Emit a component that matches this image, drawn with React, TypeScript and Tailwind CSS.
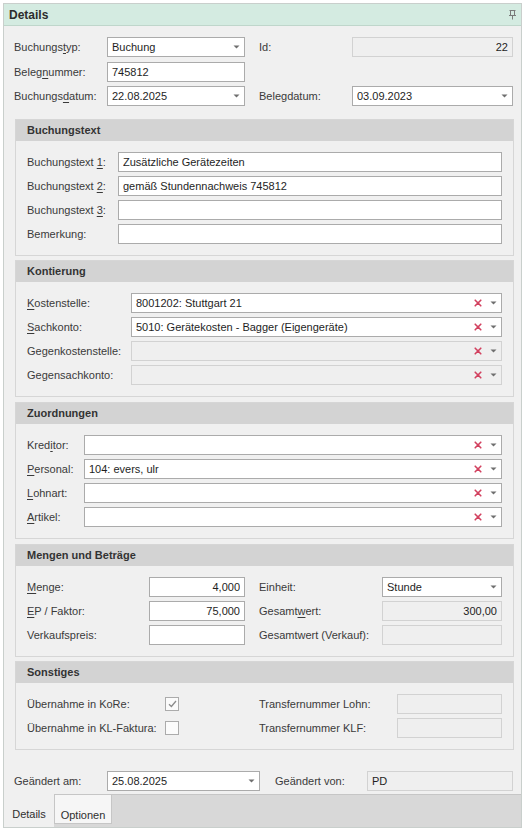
import React from "react";

const Arrow = () => (
  <svg width="7" height="4" viewBox="0 0 7 4" className="shrink-0">
    <path d="M0.5 0.5 L6.5 0.5 L3.5 3.5 Z" fill="#6f6f6f" />
  </svg>
);

const Cross = () => (
  <svg width="8" height="8" viewBox="0 0 8 8" className="shrink-0">
    <path d="M1.2 1.2 L6.8 6.8 M6.8 1.2 L1.2 6.8" stroke="#d2415f" strokeWidth="1.6" strokeLinecap="round" />
  </svg>
);

type FieldProps = {
  value?: React.ReactNode;
  className?: string;
  right?: boolean;
  disabled?: boolean;
  combo?: boolean;
  lookup?: boolean;
};

const Field = ({ value, className = "", right, disabled, combo, lookup }: FieldProps) => (
  <div
    className={
      "h-[20px] flex items-center border pl-[4px] pr-[4px] " +
      (disabled ? "bg-[#efefef] border-[#d2d2d2] " : "bg-white border-[#ababab] ") +
      className
    }
  >
    <div className={"flex-1 truncate text-[#1e1e1e] " + (right ? "text-right" : "")}>{value}</div>
    {lookup && (
      <div className="flex items-center gap-[8px] pl-[4px]">
        <Cross />
        <Arrow />
      </div>
    )}
    {combo && (
      <div className="flex items-center pl-[4px]">
        <Arrow />
      </div>
    )}
  </div>
);

const U = ({ children }: { children: React.ReactNode }) => <span className="underline underline-offset-2">{children}</span>;

const Label = ({ children, className = "" }: { children: React.ReactNode; className?: string }) => (
  <div className={"shrink-0 text-[#3a3a3a] whitespace-nowrap " + className}>{children}</div>
);

const Group = ({ title, children, mt = "mt-[4px]" }: { title: string; children: React.ReactNode; mt?: string }) => (
  <div className={"ml-[11px] mr-[7px] border border-[#d6d6d6] bg-[#f0f0f0] " + mt}>
    <div className="h-[21px] bg-[#d3d3d3] flex items-center pl-[11px] font-bold text-[#333333]">{title}</div>
    <div className="pt-[11px] pb-[11px] px-[11px] flex flex-col gap-[4px]">{children}</div>
  </div>
);

const Row = ({ children }: { children: React.ReactNode }) => <div className="h-[20px] flex items-center">{children}</div>;

const Check = ({ checked }: { checked?: boolean }) => (
  <div className="w-[14px] h-[14px] border border-[#ababab] bg-[#fbfbfb] flex items-center justify-center">
    {checked && (
      <svg width="9" height="8" viewBox="0 0 9 8">
        <path d="M1 4.2 L3.4 6.5 L8 1" stroke="#8c8c8c" strokeWidth="1.3" fill="none" />
      </svg>
    )}
  </div>
);

export default function App() {
  return (
    <div className="w-[528px] h-[832px] bg-white font-['Liberation_Sans',Arial,sans-serif] text-[11px] leading-none overflow-hidden">
      <div className="ml-[3px] mt-[3px] w-[519px] h-[825px] border border-[#c9cfcc] flex flex-col">
        <div className="h-[22px] bg-[#d4ebe1] border-b border-[#bfd6cb] flex items-center justify-between pl-[5px] pr-[5px] shrink-0">
          <span className="font-bold text-[12px] text-[#2d2d2d]">Details</span>
          <svg width="7" height="10" viewBox="0 0 7 10">
            <path d="M0.5 0.5 H6.5 M1.5 0.5 V5.5 M5.5 0.5 V5.5 M0 5.5 H7 M3.5 5.5 V9.5" stroke="#7a7a7a" strokeWidth="1" fill="none" />
          </svg>
        </div>
        <div className="flex-1 bg-[#f0f0f0] pt-[11px] flex flex-col">
          <div className="pl-[10px] flex flex-col">
            <Row>
              <Label className="w-[93px]">Buchungs<U>t</U>yp:</Label>
              <Field className="w-[138px]" value="Buchung" combo />
              <Label className="w-[93px] ml-[14px]">Id:</Label>
              <Field className="w-[161px]" value="22" right disabled />
            </Row>
            <div className="mt-[5px]">
              <Row>
                <Label className="w-[93px]">Beleg<U>n</U>ummer:</Label>
                <Field className="w-[138px]" value="745812" />
              </Row>
            </div>
            <div className="mt-[4px]">
              <Row>
                <Label className="w-[93px]">Buchungs<U>d</U>atum:</Label>
                <Field className="w-[138px]" value="22.08.2025" combo />
                <Label className="w-[93px] ml-[14px]">Belegdatum:</Label>
                <Field className="w-[161px]" value="03.09.2023" combo />
              </Row>
            </div>
          </div>

          <Group title="Buchungstext" mt="mt-[13px]">
            <Row>
              <Label className="w-[91px]">Buchungstext <U>1</U>:</Label>
              <Field className="flex-1" value="Zusätzliche Gerätezeiten" />
            </Row>
            <Row>
              <Label className="w-[91px]">Buchungstext <U>2</U>:</Label>
              <Field className="flex-1" value="gemäß Stundennachweis 745812" />
            </Row>
            <Row>
              <Label className="w-[91px]">Buchungstext <U>3</U>:</Label>
              <Field className="flex-1" value="" />
            </Row>
            <Row>
              <Label className="w-[91px]">Bemerkung:</Label>
              <Field className="flex-1" value="" />
            </Row>
          </Group>

          <Group title="Kontierung" mt="mt-[4px]">
            <Row>
              <Label className="w-[104px]"><U>K</U>ostenstelle:</Label>
              <Field className="flex-1" value="8001202: Stuttgart 21" lookup />
            </Row>
            <Row>
              <Label className="w-[104px]"><U>S</U>achkonto:</Label>
              <Field className="flex-1" value="5010: Gerätekosten - Bagger (Eigengeräte)" lookup />
            </Row>
            <Row>
              <Label className="w-[104px]">Gegenkostenstelle:</Label>
              <Field className="flex-1" value="" lookup disabled />
            </Row>
            <Row>
              <Label className="w-[104px]">Gegensachkonto:</Label>
              <Field className="flex-1" value="" lookup disabled />
            </Row>
          </Group>

          <Group title="Zuordnungen" mt="mt-[5px]">
            <Row>
              <Label className="w-[57px]">Kred<U>i</U>tor:</Label>
              <Field className="flex-1" value="" lookup />
            </Row>
            <Row>
              <Label className="w-[57px]"><U>P</U>ersonal:</Label>
              <Field className="flex-1" value="104: evers, ulr" lookup />
            </Row>
            <Row>
              <Label className="w-[57px]"><U>L</U>ohnart:</Label>
              <Field className="flex-1" value="" lookup />
            </Row>
            <Row>
              <Label className="w-[57px]"><U>A</U>rtikel:</Label>
              <Field className="flex-1" value="" lookup />
            </Row>
          </Group>

          <Group title="Mengen und Beträge" mt="mt-[5px]">
            <Row>
              <Label className="w-[122px]"><U>M</U>enge:</Label>
              <Field className="w-[96px]" value="4,000" right />
              <Label className="w-[123px] ml-[14px]">Einheit:</Label>
              <Field className="flex-1" value="Stunde" combo />
            </Row>
            <Row>
              <Label className="w-[122px]"><U>E</U>P / Faktor:</Label>
              <Field className="w-[96px]" value="75,000" right />
              <Label className="w-[123px] ml-[14px]">Gesamt<U>w</U>ert:</Label>
              <Field className="flex-1" value="300,00" right disabled />
            </Row>
            <Row>
              <Label className="w-[122px]">Verkaufspreis:</Label>
              <Field className="w-[96px]" value="" />
              <Label className="w-[123px] ml-[14px]">Gesamtwert (Verkauf):</Label>
              <Field className="flex-1" value="" disabled />
            </Row>
          </Group>

          <Group title="Sonstiges" mt="mt-[4px]">
            <Row>
              <Label className="w-[138px]">Übernahme in KoRe:</Label>
              <Check checked />
              <div className="w-[80px] shrink-0" />
              <Label className="w-[138px]">Transfernummer Lohn:</Label>
              <Field className="flex-1" value="" disabled />
            </Row>
            <Row>
              <Label className="w-[138px]">Übernahme in KL-Faktura:</Label>
              <Check />
              <div className="w-[80px] shrink-0" />
              <Label className="w-[138px]">Transfernummer KLF:</Label>
              <Field className="flex-1" value="" disabled />
            </Row>
          </Group>

          <div className="pl-[10px] mt-[21px]">
            <Row>
              <Label className="w-[93px]">Geändert am:</Label>
              <Field className="w-[153px]" value="25.08.2025" combo />
              <Label className="w-[92px] ml-[15px]">Geändert von:</Label>
              <Field className="w-[146px]" value="PD" disabled />
            </Row>
          </div>
        </div>
        <div className="h-[33px] shrink-0 bg-[#d8d8d8] border-t border-[#c6c6c6] flex items-start">
          <div className="w-[50px] h-[33px] bg-[#f0f0f0] flex justify-center pt-[15px] text-[#2f2f2f] -mt-px">Details</div>
          <div className="w-[58px] h-[29px] bg-[#f6f6f6] border border-t-0 border-[#c6c6c6] flex justify-center pt-[15px] text-[#2f2f2f]">Optionen</div>
        </div>
      </div>
    </div>
  );
}
